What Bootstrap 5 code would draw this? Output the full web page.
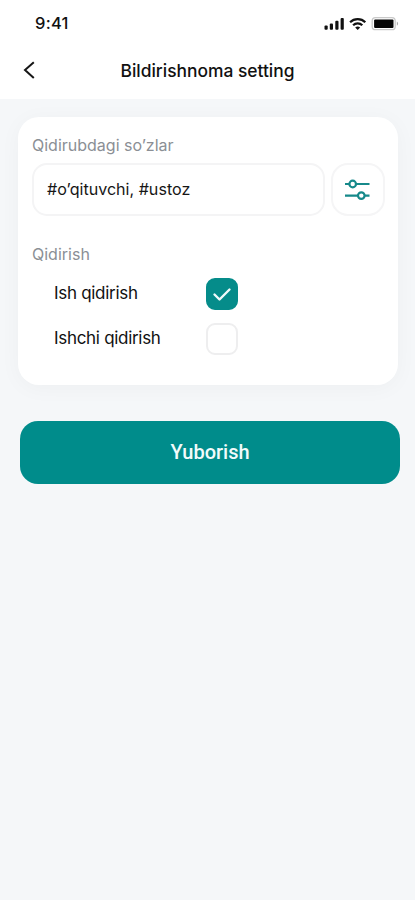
<!DOCTYPE html>
<html lang="uz">
<head>
<meta charset="utf-8">
<meta name="viewport" content="width=device-width, initial-scale=1">
<title>Bildirishnoma setting</title>
<link href="https://cdn.jsdelivr.net/npm/bootstrap@5.3.0/dist/css/bootstrap.min.css" rel="stylesheet">
<style>
body{font-family:Inter,"Liberation Sans",sans-serif;background:#f5f7f9;color:#111;min-height:900px}
.app-head{height:99px}
.status-bar{height:47px;padding:0 16px 0 35px}
.clock{font-size:16.5px;font-weight:500;letter-spacing:.25px}
.title-bar{height:48px}
.title-bar h1{font-size:17.4px;font-weight:500;letter-spacing:0;line-height:48px}
.back-btn{left:19px;top:10px;line-height:0}
.panel{margin:18px 17px 0 18px;height:268px;border-radius:21px;padding:17px 13px 0 14px;box-shadow:0 3px 22px rgba(30,40,40,.035)}
.caption{font-size:16px;line-height:22px;color:#8b8f95;font-weight:400}
.caption-second{margin-top:27px}
.search-row{gap:6px;margin-top:7px}
.field{height:53px;border:2px solid #f4f4f5;border-radius:15px;font-size:16.1px;padding:0 13px;color:#161616}
.filter-btn{width:54px;height:53px;border:2px solid #f5f5f6;border-radius:17px}
.opt-label{width:152px;font-size:17px;line-height:30px;letter-spacing:-.3px;font-weight:400}
.options{padding-left:22px;margin-top:13px}
.option + .option{margin-top:13px}
.options .form-check-input{width:32px;height:32px;border:2px solid #eeeeef;border-radius:9px}
.options .form-check-input:checked{background-color:#058c8a;border-color:#058c8a;background-image:url("data:image/svg+xml,%3Csvg xmlns='http://www.w3.org/2000/svg' viewBox='0 0 28 28'%3E%3Cpath d='M6.5 14.5l5 5L21.5 9.5' fill='none' stroke='%23effafa' stroke-width='2.4' stroke-linecap='round' stroke-linejoin='round'/%3E%3C/svg%3E")}
.send-btn{margin:36px 15px 0 20px;height:63px;border-radius:18px;background:#008c8b!important;color:#f2fbfb!important;font-family:Roboto,sans-serif;font-size:20px;font-weight:500;padding-bottom:8px}
</style>
</head>
<body>
<header class="app-head bg-white">
  <div class="status-bar d-flex align-items-center justify-content-between">
    <span class="clock">9:41</span>
    <svg width="76" height="16" viewBox="323.5 16 76 16" aria-hidden="true">
      <g fill="#111"><rect x="325" y="25.6" width="3.2" height="4.2" rx="1"/><rect x="330.3" y="23.4" width="3.2" height="6.4" rx="1"/><rect x="335.8" y="20.8" width="3.2" height="9" rx="1"/><rect x="341.1" y="18" width="3.2" height="11.8" rx="1"/></g>
      <g fill="none" stroke="#111" stroke-width="2.2"><path d="M350.6 22.2a10.8 10.8 0 0 1 15.2 0"/><path d="M353.6 25.3a6.5 6.5 0 0 1 9.2 0"/></g>
      <path d="M355.7 27.6a3.6 3.6 0 0 1 5 0l-2.5 2.5z" fill="#111"/>
      <rect x="372.7" y="17.7" width="23" height="12" rx="3.3" fill="none" stroke="#c9c9c9" stroke-width="1.3"/>
      <rect x="374.6" y="19.5" width="19.4" height="8.4" rx="1" fill="#050505"/>
      <path d="M397.4 21.6q2.4 2 0 4.1z" fill="#aaa"/>
    </svg>
  </div>
  <div class="title-bar position-relative text-center">
    <a href="#" class="back-btn position-absolute" aria-label="Orqaga"><svg width="20" height="26" viewBox="0 0 20 26"><path d="M14.8 5.2 6 13l8.8 8" fill="none" stroke="#161616" stroke-width="2"/></svg></a>
    <h1 class="m-0">Bildirishnoma setting</h1>
  </div>
</header>
<main class="d-flex flex-column">
  <section class="panel bg-white">
    <div class="caption">Qidirubdagi so’zlar</div>
    <div class="search-row d-flex">
      <div class="field flex-grow-1 d-flex align-items-center">#o’qituvchi, #ustoz</div>
      <button class="filter-btn bg-white p-0 d-flex align-items-center justify-content-center" type="button" aria-label="Filter"><svg width="28" height="24" viewBox="0 0 28 24" fill="none" stroke="#16898a" stroke-width="2.2"><path d="M1 6h4.5M11.8 6H25.5M1 17.6h12.8M20.2 17.6h5.3"/><circle cx="8.7" cy="6" r="3.3"/><circle cx="17.3" cy="17.6" r="3.3"/></svg></button>
    </div>
    <div class="caption caption-second">Qidirish</div>
    <div class="options">
      <div class="option d-flex"><label class="opt-label" for="job">Ish qidirish</label><input class="form-check-input m-0" type="checkbox" id="job" checked></div>
      <div class="option d-flex"><label class="opt-label" for="worker">Ishchi qidirish</label><input class="form-check-input m-0" type="checkbox" id="worker"></div>
    </div>
  </section>
  <button class="send-btn btn border-0" type="button">Yuborish</button>
</main>
<script src="https://cdn.jsdelivr.net/npm/bootstrap@5.3.0/dist/js/bootstrap.bundle.min.js"></script>
</body>
</html>
